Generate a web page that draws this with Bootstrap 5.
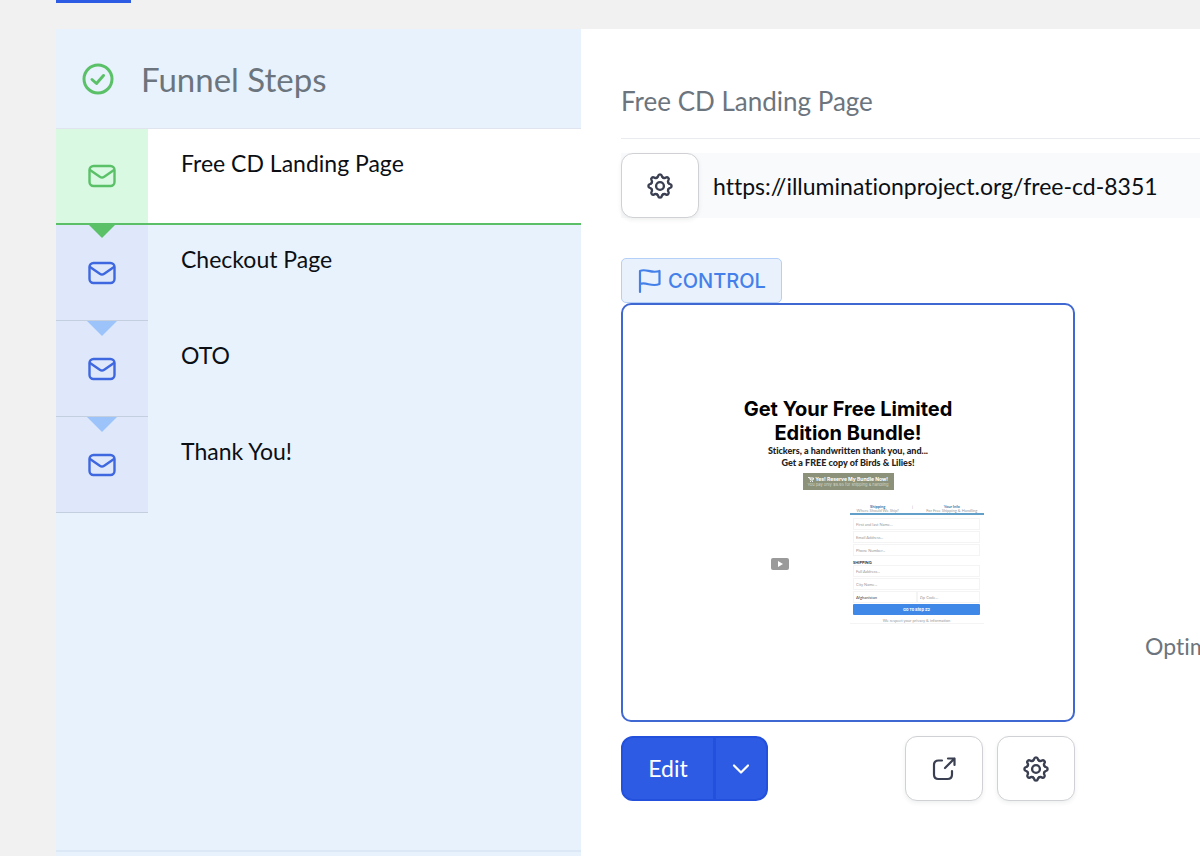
<!DOCTYPE html>
<html lang="en">
<head>
<meta charset="utf-8">
<meta name="viewport" content="width=device-width, initial-scale=1">
<title>Funnel Steps</title>
<link href="https://cdn.jsdelivr.net/npm/bootstrap@5.3.0/dist/css/bootstrap.min.css" rel="stylesheet">
<style>
  body { font-family: Lato, sans-serif; font-size: 23px; line-height: 32px; color: #0b0f14; background: #f1f1f1; overflow-x: hidden; font-variant-ligatures: none; }
  a { color: inherit; text-decoration: none; }
  svg { display: block; fill: none; stroke: currentColor; stroke-linecap: round; stroke-linejoin: round; }
  .shell { padding-left: 56px; min-height: 100vh; }
  .tab-strip { height: 29px; }
  .tab-active { width: 75px; height: 3px; background: #2d5be3; }
  .workspace { display: grid; grid-template-columns: minmax(300px, 525px) minmax(0, 1fr); }

  /* sidebar */
  .steps-panel { background: #e8f2fd; }
  .steps-head { height: 100px; padding-left: 26px; gap: 27px; border-bottom: 1px solid #dfe4ee; color: #6c757d; }
  .steps-head h1 { font-size: 33px; line-height: 44px; font-weight: 400; }
  .steps-head svg { color: #5bc168; stroke-width: 3; }
  .steps-body { border-bottom: 2px solid #dce8f5; margin-bottom: 4px; }
  .step { height: 96px; }
  .step-icon { width: 92px; color: #3e67e0; background: #dfe8fb; border-bottom: 1px solid #c3cfdf; }
  .step-label { padding: 18px 0 0 33px; }
  .step-current { background: #fff; border-bottom: 2px solid #5bbf68; }
  .step-current .step-icon { color: #5bc168; background: #d9f9e2; border-bottom: 0; }
  .step-arrow { top: 100%; left: 31px; border: 15px solid transparent; border-bottom: 0; border-top-color: #9cc4fb; }
  .step-current .step-arrow { border-top-color: #5bc168; }

  /* main area */
  .detail { padding: 52px 0 32px 40px; overflow: hidden; }
  .detail-title { font-size: 26px; line-height: 40px; font-weight: 400; color: #6c757d; padding-bottom: 17px; margin-bottom: 14px; border-bottom: 1px solid #e9ebee; }
  .url-row { background: #f9fafc; margin-bottom: 40px; }
  .url-field { border: 0; background: transparent; padding: 0 14px; color: #0b0f14; outline: 0; font-variant-ligatures: none; }
  .tool-btn { width: 78px; height: 65px; padding: 0; border: 1px solid #cfd1d4; border-radius: 12px; background: #fff; color: #3a3f51; }
  .variant { width: 454px; max-width: 100%; }
  .control-flag { height: 45px; padding: 0 15px; gap: 5px; border: 1px solid #b4cff8; border-radius: 5px; background: #e9f1fd; color: #4480ea; font: 500 20px/30px Inter, sans-serif; }
  .preview { height: 419px; border: 2px solid #4068d2; border-radius: 10px; padding-top: 92px; color: #000; background: #fff; }
  .variant-actions { padding-top: 14px; gap: 14px; }
  .edit-btn { height: 65px; border: 2px solid #2350dc; background: #2d5be3; color: #fff; border-radius: 12px; font-size: 23px; }
  .edit-main { width: 94px; padding: 0; }
  .edit-more { width: 54px; padding: 0; }
  .optim { padding-left: 70px; padding-top: 372px; color: #6c757d; }

  /* page preview */
  .pv-title { font: 700 20px/24px Inter, sans-serif; width: 240px; }
  .pv-sub { font-size: 9px; line-height: 12px; font-weight: 900; color: #222; margin-bottom: 4px; }
  .pv-cta { width: 91px; height: 17px; background: #8b9279; color: #fff; border: 0; padding: 0; font: 700 5px/6px Inter, sans-serif; }
  .pv-cta small { display: block; font-size: 4px; line-height: 5px; font-weight: 400; color: #d5d8cd; }
  .pv-split { padding: 14px 89px 0 148px; }
  .pv-play { width: 18px; height: 12px; border-radius: 2px; background: #9a9a9a; color: #fff; margin-top: 54px; }
  .pv-form { width: 134px; font-size: 4px; line-height: 4px; color: #999; border-bottom: 1px solid #f4f4f4; }
  .pv-tabs { border-bottom: 2px solid #629fc9; height: 11px; margin-bottom: 3px; padding-top: 1px; }
  .pv-tabs b { display: block; color: #2a78b0; }
  .pv-fields { padding: 0 4px 0 3px; }
  .pv-fields input { display: block; width: 100%; height: 12px; margin-bottom: 1px; border: 1px solid #f4f4f4; padding: 0 2px; font-size: 4px; color: #444; background: #fff; }
  .pv-fields input::placeholder { color: #999; }
  .pv-go { width: 100%; height: 11px; border: 0; border-radius: 1px; padding: 0; background: #3f88e8; color: #fff; font: 700 4px/11px Inter, sans-serif; display: block; }
</style>
</head>
<body>
<svg width="0" height="0" class="position-absolute" aria-hidden="true">
  <defs>
    <path id="tooth" d="M8.86 4.42C9.87 4 10.25 3.5 10.3 2.7A1.73 1.73 0 0 1 13.7 2.7C13.75 3.5 14.13 4 15.14 4.42"/>
    <symbol id="gear" viewBox="0 0 24 24">
      <use href="#tooth"/><use href="#tooth" transform="rotate(45 12 12)"/><use href="#tooth" transform="rotate(90 12 12)"/><use href="#tooth" transform="rotate(135 12 12)"/>
      <use href="#tooth" transform="rotate(180 12 12)"/><use href="#tooth" transform="rotate(225 12 12)"/><use href="#tooth" transform="rotate(270 12 12)"/><use href="#tooth" transform="rotate(315 12 12)"/>
      <circle cx="12" cy="12" r="3.6"/>
    </symbol>
    <symbol id="mail" viewBox="0 0 28 24"><rect x="1.5" y="2" width="25" height="20" rx="4"/><path d="M2 6l9.800 6.800q2.200 1.500 4.400 0L26 6"/></symbol>
  </defs>
</svg>

<div class="shell d-flex flex-column">
  <div class="tab-strip"><div class="tab-active"></div></div>
  <div class="workspace flex-grow-1">
    <aside class="steps-panel d-flex flex-column">
      <div class="steps-head d-flex align-items-center">
        <svg width="32" height="32" viewBox="0 0 32 32"><circle cx="16" cy="16" r="14"/><path d="M10 16.500l4.500 4L21.500 12.500"/></svg>
        <h1 class="m-0">Funnel Steps</h1>
      </div>
      <nav class="steps-body flex-grow-1">
        <a href="#" class="step step-current d-flex position-relative" aria-current="page">
          <span class="step-icon d-flex align-items-center justify-content-center"><svg width="28" height="24" stroke-width="2.400"><use href="#mail"/></svg></span>
          <span class="step-label">Free CD Landing Page</span>
          <span class="step-arrow position-absolute z-1"></span>
        </a>
        <a href="#" class="step d-flex position-relative">
          <span class="step-icon d-flex align-items-center justify-content-center"><svg width="28" height="24" stroke-width="2.400"><use href="#mail"/></svg></span>
          <span class="step-label">Checkout Page</span>
          <span class="step-arrow position-absolute z-1"></span>
        </a>
        <a href="#" class="step d-flex position-relative">
          <span class="step-icon d-flex align-items-center justify-content-center"><svg width="28" height="24" stroke-width="2.400"><use href="#mail"/></svg></span>
          <span class="step-label">OTO</span>
          <span class="step-arrow position-absolute z-1"></span>
        </a>
        <a href="#" class="step d-flex position-relative">
          <span class="step-icon d-flex align-items-center justify-content-center"><svg width="28" height="24" stroke-width="2.400"><use href="#mail"/></svg></span>
          <span class="step-label">Thank You!</span>
        </a>
      </nav>
    </aside>

    <main class="detail bg-white">
      <h2 class="detail-title mt-0">Free CD Landing Page</h2>
      <div class="url-row d-flex">
        <button type="button" class="tool-btn btn shadow-sm d-flex align-items-center justify-content-center flex-shrink-0" aria-label="URL settings"><svg width="26" height="26" stroke-width="2.200"><use href="#gear"/></svg></button>
        <input class="url-field flex-grow-1" type="text" aria-label="Page URL" value="https://illuminationproject.org/free-cd-8351" readonly>
      </div>
      <div class="d-flex">
        <section class="variant flex-shrink-0">
          <div class="control-flag d-inline-flex align-items-center align-top"><svg width="26" height="26" viewBox="0 0 26 26" stroke-width="2.200"><path d="M3 24V3c6-3 11 3 19.500 0v13c-8 3.500-13-2.500-19.500 0"/></svg>CONTROL</div>
          <div class="preview">
            <div class="text-center">
              <div class="pv-title mx-auto">Get Your Free Limited Edition Bundle!</div>
              <div class="pv-sub">Stickers, a handwritten thank you, and...<br>Get a FREE copy of Birds &amp; Lilies!</div>
              <button type="button" class="pv-cta d-block mx-auto"><svg class="d-inline" width="6" height="5" viewBox="0 0 12 10" stroke-width="2"><path d="M1 1h2l2 5h5l1-4H4"/><path d="M5 9h0M9 9h0"/></svg> Yes! Reserve My Bundle Now!<small>You pay only $9.95 for shipping &amp; handling</small></button>
            </div>
            <div class="pv-split d-flex justify-content-between align-items-start">
              <div class="pv-play d-flex align-items-center justify-content-center"><svg width="6" height="6" viewBox="0 0 6 6"><path d="M1 0l5 3-5 3z" fill="currentColor" stroke="none"/></svg></div>
              <form class="pv-form">
                <div class="pv-tabs d-flex justify-content-around text-center">
                  <span><b>Shipping</b>Where Should We Ship?</span><span>|</span><span><b>Your Info</b>For Free Shipping &amp; Handling</span>
                </div>
                <div class="pv-fields">
                  <input aria-label="Full name" placeholder="First and last Name...">
                  <input aria-label="Email" placeholder="Email Address...">
                  <input aria-label="Phone" placeholder="Phone Number...">
                  <b class="d-block pt-1 text-dark">SHIPPING</b>
                  <input aria-label="Address" placeholder="Full Address...">
                  <input aria-label="City" placeholder="City Name...">
                  <div class="d-flex"><input aria-label="Country" value="Afghanistan"><input aria-label="Zip code" placeholder="Zip Code..."></div>
                  <button type="button" class="pv-go">Go To Step #2</button>
                  <div class="text-center pt-1">We respect your privacy &amp; information</div>
                </div>
              </form>
            </div>
          </div>
          <div class="variant-actions d-flex">
            <div class="btn-group me-auto">
              <button type="button" class="edit-btn edit-main btn">Edit</button>
              <button type="button" class="edit-btn edit-more btn d-flex align-items-center justify-content-center" aria-label="More edit options"><svg width="18" height="12" viewBox="0 0 18 12" stroke-width="2.200"><path d="M2 2.500l7 7 7-7"/></svg></button>
            </div>
            <button type="button" class="tool-btn btn shadow-sm d-flex align-items-center justify-content-center" aria-label="Open page"><svg width="26" height="26" viewBox="0 0 26 26" stroke-width="2.200"><path d="M11 4.500H7.500Q3 4.500 3 9V18.500Q3 23 7.500 23H16.500Q21 23 21 18.500V15M14 12L23.500 2.500M17 2.500H23.500V9"/></svg></button>
            <button type="button" class="tool-btn btn shadow-sm d-flex align-items-center justify-content-center" aria-label="Page settings"><svg width="26" height="26" stroke-width="2.200"><use href="#gear"/></svg></button>
          </div>
        </section>
        <div class="optim text-nowrap">Optim</div>
      </div>
    </main>
  </div>
</div>
<script src="https://cdn.jsdelivr.net/npm/bootstrap@5.3.0/dist/js/bootstrap.bundle.min.js"></script>
</body>
</html>
